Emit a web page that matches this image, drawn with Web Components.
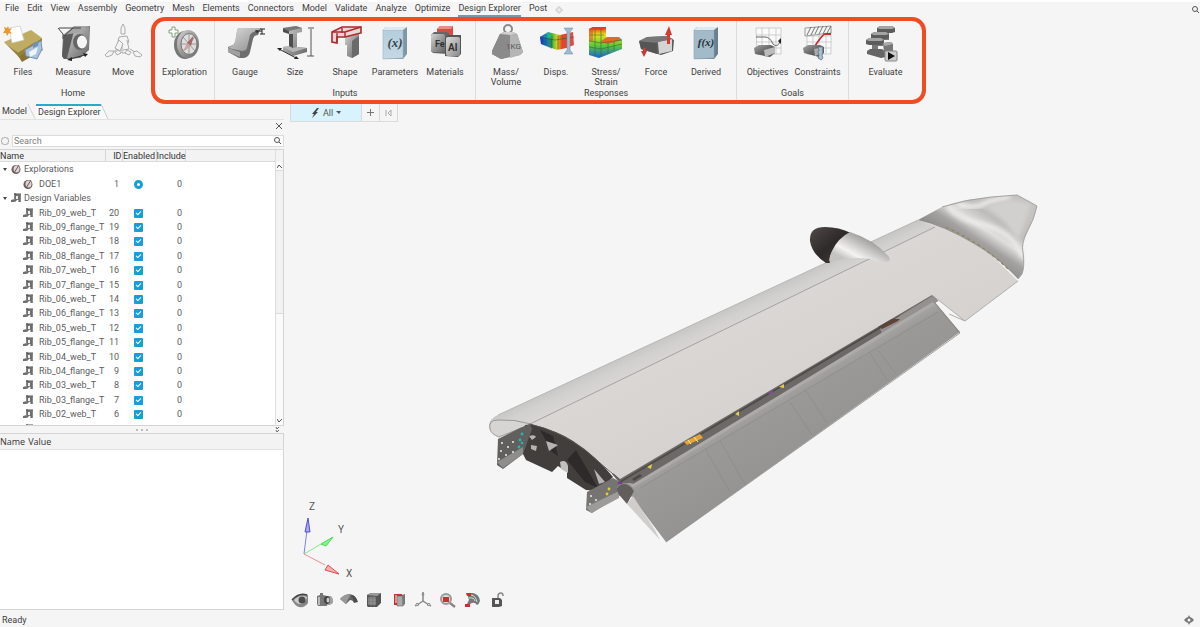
<!DOCTYPE html>
<html lang="en">
<head>
<meta charset="utf-8">
<title>Design Explorer</title>
<style>
html,body{margin:0;height:100%}
body{background:#f5f5f5;color:#404040;font:9px/12px Roboto,"Liberation Sans",Arial,sans-serif;overflow:hidden}
</style>
</head>
<body>
<de-app></de-app>
<script>
const DEFS = `<defs>
<linearGradient id="g" x1="0" y1="0" x2="1" y2="1"><stop offset="0" stop-color="#d4d4d4"/><stop offset=".5" stop-color="#9a9a9a"/><stop offset="1" stop-color="#666"/></linearGradient>
<linearGradient id="d" x1="0" y1="0" x2="1" y2="1"><stop offset="0" stop-color="#a4a4a4"/><stop offset=".5" stop-color="#666"/><stop offset="1" stop-color="#4c4c4c"/></linearGradient>
<linearGradient id="l" x1="0" y1="0" x2="1" y2="1"><stop offset="0" stop-color="#dcdcdc"/><stop offset="1" stop-color="#8a8a8a"/></linearGradient>
<linearGradient id="b" x1="0" y1="0" x2="0" y2="1"><stop offset="0" stop-color="#b4cedd"/><stop offset="1" stop-color="#c6d9e4"/></linearGradient>
<linearGradient id="r" x1="0" y1="0" x2="1" y2="0"><stop offset="0" stop-color="#2230c8"/><stop offset=".2" stop-color="#18a8c8"/><stop offset=".35" stop-color="#3cb83c"/><stop offset=".5" stop-color="#d8d020"/><stop offset=".65" stop-color="#e84028"/><stop offset="1" stop-color="#e05048"/></linearGradient>
<linearGradient id="v" x1="0" y1="0" x2="0" y2="1"><stop offset="0" stop-color="#e83018"/><stop offset=".25" stop-color="#e8e020"/><stop offset=".6" stop-color="#5cc83c"/><stop offset="1" stop-color="#1860d8"/></linearGradient>
</defs>`;

const beam = (x, y) => `<path d="M${x} ${y}l3-2h12l3 2v4l-3 1H${x+3}l-3-1z" fill="#5c5c5c"/><path d="M${x} ${y}l3-2h12l3 2-3 1h-12z" fill="#a4a4a4"/><path d="M${x+6} ${y+5}h6v7h-6z" fill="#777"/>`;

const ICONS = {
files:`<path d="M8 22l23-5 9 10-21 12z" fill="#8a7230"/><path d="M1 19l27-12 11 8-24 15z" fill="#c0ab62"/><path d="M1 19l14 11 24-15v3L16 34z" fill="#95803a"/><path d="M22 27l16-9 1 8-5 10-11-3z" fill="#a9c3dc" stroke="#7394b5"/><path d="M26 29l9-5-2 7-6 3z" fill="#eef4f8"/><path d="M30 20l6-2-1 5-5 2z" fill="#6f92b4"/><path d="M6 5l11-2 4 14-12 3z" fill="#fff" stroke="#c8c8c8" stroke-width=".7"/><path d="M5 3l1 3 3-1-2 3 2 3-3-1-2 3-1-3-3 0 2-3-1-3 3 1z" fill="#e8982c"/>`,
measure:`<path d="M10 12l12-8 15-1-1 24-9 8-16 1-2-3z" fill="#777"/><path d="M11 13l12-8v30l-12 1-2-3z" fill="#5c5c5c"/><path d="M21 8l15-4v22l-9 9H14z" fill="url(#g)"/><path d="M10 12l11-9 15 0-12 7z" fill="#a5a5a5"/><ellipse cx="27" cy="19" rx="7" ry="8" fill="#666"/><ellipse cx="29" cy="19" rx="5" ry="6.500" fill="#f5f5f5"/><path d="M6 5h22M5 5l5 6v5M11 13l9-8" stroke="#444" fill="none"/><path d="M17 36l15-4" stroke="#333"/><path d="M14 37l5-3v4zM35 31l-5-1 2 4z" fill="#222"/>`,
move:`<g fill="#f4f4f4" stroke="#a4a4a4" stroke-width=".9"><path d="M20 1l2 4v6h-4V5z"/><path d="M17 15h4v9h-4z"/><path d="M16 14l-1 5 4 2v9h5v-9l2-2-2-6z"/><path d="M16 17l-4 8 5 3 3-7zM24 17l2 9-6 1"/><path d="M14 26l-5 4M27 26l5 3"/><path d="M2 32l4-4 5 0-2 4-5 2zM39 32l-5-4-4 1 2 4 5 1z"/><path d="M12 29l4-2 2 3-4 2zM28 29l-4-2-2 3 4 2z"/></g>`,
exploration:`<ellipse cx="20" cy="22" rx="11" ry="14" fill="#777"/><ellipse cx="23" cy="21" rx="11" ry="14" fill="url(#g)"/><ellipse cx="24" cy="21" rx="8" ry="10.500" fill="#dedede" stroke="#777"/><path d="M24 11v20M16 21h16M18 14l12 14M30 14L18 28" stroke="#888" stroke-width=".8"/><path d="M29 12l-3 11-4-3z" fill="#a86a66"/><path d="M18 29l4-9 4 3z" fill="#c9a5a3"/><path d="M7 4h3v3h3v3h-3v4H7v-4H4V7h3z" fill="#fff" stroke="#6a8a5a" stroke-width=".8"/>`,
gauge:`<path d="M12 8q0-3 4-3h20l-3 7q-4 0-5 4l-3 13q-1 5-6 6h-5L3 29v-5l5-2q2-1 3-6z" fill="#6e6e6e"/><path d="M12 8q0-3 4-3h20l-3 3q-6 0-8 4l-3 13q-1 3-5 3L3 25l5-3q2-1 2-4z" fill="url(#l)"/><path d="M3 25l12 4v5L3 29z" fill="#a0a0a0"/><path d="M30 8h7M32 7v3M35 6h5M37 6v5M35 11h5" stroke="#222"/>`,
size:`<path d="M8 5l13-2 6 2v4l-5 1v14l10 1v4l-14 4-10-5v-4l6-1V10L8 9z" fill="url(#g)"/><path d="M8 5l13-2 6 2-13 3z" fill="#777"/><path d="M8 5l6 3v3l-6-2zM14 11h4v14h-4z" fill="#4d4d4d"/><path d="M8 24l6-1 4 2 4-1 10 1-14 4z" fill="#b5b5b5"/><path d="M33 5h6M32 33h7M36 6v27" stroke="#555"/><path d="M4 26l17 9" stroke="#333"/><path d="M2 25h5l-2 3zM24 36h-5l2-3z" fill="#222"/>`,
shape:`<path d="M20 14l14-5v22l-7 4-5-2V22h-2z" fill="url(#g)"/><path d="M27 18l7-5v18l-7 4z" fill="#6a6a6a"/><path d="M7 9l10-5h19v6l-16 4h-8v6l-5-1z" fill="#ead6d6" stroke="#b3262c" stroke-width="1.600"/><path d="M7 9h13l16-5M20 9v5M12 10v9M17 5v5" stroke="#b3262c" stroke-width="1.400" fill="none"/>`,
parameters:`<path d="M8 7l3-3h21v27l-4 5H9z" fill="#7f97a5"/><path d="M8 7h20v28L8 36z" fill="url(#b)" stroke="#9bb4c3" stroke-width=".6"/><path d="M8 7l3-3h21l-4 3z" fill="#dce9f0"/><text x="20" y="24" text-anchor="middle" font-family="Liberation Serif" font-style="italic" font-weight="700" font-size="13" fill="#38434a">(x)</text>`,
materials:`<path d="M12 6l3-3h13v17H12z" fill="#d94a44"/><path d="M12 6l3-3h13l-2 3z" fill="#ee8c80"/><path d="M6 12l3-3h13l3 3v18l-3 1-14-1-2-2z" fill="#666"/><rect x="6" y="11" width="14" height="18" rx="2" fill="url(#g)"/><text x="10" y="24" font-size="9" font-weight="700" fill="#333">Fe</text><path d="M20 15l3-3h13v19l-3 3-13-1z" fill="#555"/><rect x="21" y="14" width="14" height="19" rx="2" fill="url(#l)"/><text x="23" y="28" font-size="10" font-weight="700" fill="#333">Al</text>`,
mass:`<circle cx="22" cy="6" r="4" fill="none" stroke="#8a8a8a" stroke-width="2"/><path d="M14 11l4-2h9l4 2 6 18-3 3-19 4-9-5v-3z" fill="#777"/><path d="M14 11l10 1 3 21-12 3-9-5v-3z" fill="#8a8a8a"/><path d="M24 12l7-1 6 18-3 3-10 3z" fill="#b5b5b5"/><path d="M14 11l4-2h9l4 2-7 1z" fill="#d0d0d0"/><text x="20" y="26" font-size="8" fill="#555">1KG</text>`,
disps:`<path d="M4 14l8-5 12 3 13-3 1 13q-8 4-17 5L5 21z" fill="url(#r)"/><path d="M4 14l15 3 19-3M10 11v11M16 13v12M22 13v13" stroke="#263" fill="none" stroke-width=".6"/><path d="M4 14l12 2v10L5 21z" fill="#102080" opacity=".3"/><path d="M28 5h9l-3 4v18l3 4h-9l3-4V9z" fill="#9dbace" stroke="#6d8ba2" stroke-width=".5"/>`,
stress:`<path d="M3 6l4-2h13v11l12-1 4 3v9l-23 9-10-3z" fill="url(#v)"/><path d="M3 6l4-2h13l-3 3z" fill="#e04020"/><path d="M14 19l7-5 12 0 3 3-14 4z" fill="#e06a28"/><path d="M3 12h15M3 18l12 2 21-3M3 24l12 2 21-5M9 6v27M15 6v28M22 20v11M28 19v9" stroke="#326b28" stroke-width=".6" fill="none"/><path d="M3 6h4v12H3z" fill="#d8452c" opacity=".5"/>`,
force:`<path d="M3 18l8-4 20-1 7 4-1 11-12 4L5 26z" fill="url(#d)"/><path d="M22 19l14-3v12l-13 3z" fill="#d4d4d4"/><path d="M3 18l8-4 20-1 6 3-16 3z" fill="#777"/><path d="M3 18l18 2v11L5 26z" fill="#555"/><path d="M33 3l3 9h-2v9h-3v-9h-2z" fill="#d63a32"/><path d="M8 34l-3-6h2v-3h3v3h1z" fill="#c93a32"/>`,
derived:`<path d="M8 7l3-3h21v27l-4 5H9z" fill="#6a7f8d"/><path d="M8 7h20v28L8 36z" fill="#a3bac8" stroke="#8ba6b7" stroke-width=".6"/><path d="M8 7l3-3h21l-4 3z" fill="#dce9f0"/><text x="20" y="23" text-anchor="middle" font-family="Liberation Serif" font-style="italic" font-weight="700" font-size="11" fill="#263038">f(x)</text>`,
objectives:`<path d="M8 5h25v26H9zM8 12h25M8 19h25M8 25h25M14 5v26M21 5v26M28 5v26" fill="#fafafa" stroke="#bbb" stroke-width=".7"/><path d="M8 14h9q5 0 8 7 4 4 7-2" fill="none" stroke="#666"/><path d="M33 15v6l-3-3z" fill="#222"/><path d="M6 25l5-3h12l4 2v6l-5 4-15-3z" fill="url(#d)"/><path d="M16 27l11-3v6l-10 4z" fill="#bbb"/>`,
constraints:`<path d="M9 6h24v25H9zM9 13h24M9 19h24M9 25h24M15 5v26M21 5v26M28 5v26" fill="#fafafa" stroke="#bbb" stroke-width=".7"/><path d="M7 5l26-2v7l-26 3z" fill="#f4f4f4" stroke="#777" stroke-width=".7"/><path d="M9 12l4-8M13 12l4-8M17 11l4-8M21 11l4-8M25 11l4-8M29 10l4-7" stroke="#555" stroke-width=".8"/><path d="M17 23q7-11 10-12h6" fill="none" stroke="#c13036" stroke-width="1.800"/><path d="M5 25l5-3h12l4 2v6l-5 4-15-4z" fill="url(#d)"/><path d="M16 26l9-2v6l-8 3z" fill="#aaa"/><path d="M20 24h5l-1 3 1 2-1 3 1 3-2 2-3-2 1-3-1-3 1-2z" fill="#a9c1cf" stroke="#526b7c" stroke-width=".7"/>`,
evaluate:`<g>${beam(11,5)}${beam(5,11)}${beam(0,17)}</g><path d="M1 28l3-2h12l4 3v5l-5 1-14-4z" fill="#666"/><path d="M17 20l8-1 2 2v9h-9z" fill="#777"/><path d="M17 20l8-1 2 2-8 2z" fill="#aaa"/><rect x="19" y="28" width="12" height="10" rx="1" fill="#ccc" stroke="#888"/><path d="M22 29l7 4-7 4z" fill="#111"/>`,
spark:`<path d="M6 0L1 6h2L1 10l6-6H5l3-4z" fill="#444"/>`,
compass:`<ellipse cx="5" cy="5.500" rx="4.500" ry="4.500" fill="#6a5f5f"/><ellipse cx="5.500" cy="5" rx="3" ry="3.500" fill="#ddd4d4"/><path d="M8 1L3 9" stroke="#6b5555"/>`,
variable:`<path d="M3 1h7v8H8V7H5L3 9H0V7l3-1z" fill="#888"/><path d="M3 1h2v7M8 2v7M0 8h5M3 1h7" stroke="#555"/><path d="M5 3h2v3H5z" fill="#eee"/>`,
gear:`<path d="M4 1l1 1h2v2l1 1-1 1v2H5L4 9 3 8H1V6L0 5l1-1V2h2z" fill="none" stroke="#b0b0b0"/>`,
lens:`<circle cx="4" cy="4" r="2.500" fill="none" stroke="#555"/><path d="M6 6l2 2" stroke="#555"/>`,
target:`<path d="M5 0l1 2 2 1 2 2-2 2-2 1-1 2-1-2-2-1-2-2 2-2 2-1z" fill="#777"/><circle cx="5" cy="5" r="1.500" fill="#f5f5f5"/>`,
eye:`<path d="M1 9q6-8 16-5v8q-3 5-9 4-4-1-7-7z" fill="#888"/><path d="M3 9q6-6 13-3-2 7-7 7-3 0-6-4z" fill="#ccc"/><circle cx="11" cy="9" r="3.500" fill="#4c4c4c"/><path d="M1 9q7-8 15-5" stroke="#444" stroke-width="1.500" fill="none"/>`,
camera:`<path d="M1 5l3-1V2h3v2l4 1v10H2l-1-2z" fill="#777"/><path d="M11 5h4l2 3v4l-3 2h-3z" fill="#a2a2a2"/><ellipse cx="11" cy="9" rx="3" ry="4" fill="#444"/><ellipse cx="12" cy="9" rx="1.500" ry="2.500" fill="#ccc"/><path d="M2 6h2v8H2z" fill="#bbb"/>`,
sheet:`<path d="M0 8q4-5 10-5 6 1 8 8l-4 1q-1-3-4-3l-4 4z" fill="url(#d)"/><path d="M0 8q5-5 10-4l-4 9z" fill="#999"/><path d="M10 5q4 1 4 6h3q-1-6-5-7z" fill="#4c4c4c"/>`,
cube:`<path d="M2 4l4-2h10v10l-4 4H3l-1-1z" fill="#555"/><path d="M2 4l4-2h10l-4 3z" fill="#999"/><path d="M3 6h8v8H3z" fill="#777"/><path d="M6 5v10M9 5v10M3 9h8M3 12h8" stroke="#aaa" stroke-width=".5"/>`,
layers:`<path d="M4 3h8v11H4z" fill="#c92e2e"/><path d="M7 5h6v10H7z" fill="#aaa" stroke="#666" stroke-width=".6"/><path d="M12 4l3-1v10l-2 2z" fill="#777"/><path d="M5 4h2v8H5z" fill="#e98c8c"/>`,
triad:`<path d="M9 2v8M9 10l-6 4M9 10l6 4" stroke="#888" stroke-width="1.500"/><path d="M9 1l1 3H8zM1 15l2-3 2 2zM17 15l-2-3-2 2z" fill="#eee" stroke="#888"/>`,
zoomred:`<circle cx="7" cy="8" r="5" fill="#ddd" stroke="#999" stroke-width="2"/><path d="M4 6h6v5H4z" fill="#c93030"/><path d="M11 12l5 4" stroke="#888" stroke-width="2.500"/>`,
section:`<path d="M4 2h6q6 1 7 8-1 3-3 4-2-3-5-2-3 1-4 3H3l3-6z" fill="#777"/><path d="M8 4q5 1 6 7M6 7q5-1 6 3" stroke="#ddd" fill="none"/><path d="M3 2h5v3H4zM2 13h5v3H2z" fill="#c92e2e"/>`,
lock:`<path d="M10 8V5q0-3 3-3 2 0 2 3" fill="none" stroke="#888" stroke-width="1.500"/><path d="M4 7h8l2 2v6l-3 1H4z" fill="#555"/><path d="M7 9h4v4H7z" fill="#eee"/>`
};
const icon = (name, w, h = w) => `<svg class="ico" width="${w}" height="${h}" viewBox="0 0 ${w} ${h}" fill="none" aria-hidden="true">${DEFS}${ICONS[name]}</svg>`;
const BTN = `button{appearance:none;border:0;background:none;padding:0;margin:0;font:inherit;color:inherit;display:block}svg{display:block;flex:none}`;

class Base extends HTMLElement{
  connectedCallback(){ if(!this.shadowRoot) this.attachShadow({mode:'open'}).innerHTML = this.render(); }
}

class MenuBar extends Base{
  render(){
    const names = ['File','Edit','View','Assembly','Geometry','Mesh','Elements','Connectors','Model','Validate','Analyze','Optimize','Design Explorer','Post'];
    return `<style>:host{display:flex;align-items:center;height:17px;border-top:2px solid #fff;box-sizing:border-box;padding:0 0 0 5px}
    nav{display:flex;gap:8px;flex:1;align-items:center}a{color:#404040;text-decoration:none;line-height:13px;border-bottom:2px solid transparent;white-space:nowrap}
    a[aria-current]{border-color:#7599a6}${BTN}</style>
    <nav>${names.map(n=>`<a href="#"${n==='Design Explorer'?' aria-current="page"':''}>${n}</a>`).join('')}<button aria-label="Add ribbon"><svg width="8" height="8" viewBox="0 0 8 8"><path d="M3 1h2v2h2v2H5v2H3V5H1V3h2z" fill="#eee" stroke="#ccc"/></svg></button></nav>
    <button aria-label="Find">${icon('lens',9)}</button>`;
  }
}

class RibbonTool extends Base{
  render(){
    return `<style>:host{display:block;flex:0 0 50px}${BTN}button{width:100%;display:flex;flex-direction:column;align-items:center;gap:4px;line-height:10px;text-align:center}span{white-space:nowrap}</style>
    <button>${icon(this.getAttribute('icon'),40)}<span><slot></slot></span></button>`;
  }
}

class RibbonGroup extends Base{
  render(){
    return `<style>:host{display:grid;grid-template:65px 10px / minmax(0,1fr);box-sizing:border-box;padding:2px 0 0}
    :host([ruled]){border-right:1px solid #dcdcdc}
    .tools{display:flex;justify-content:center}.label{text-align:center;line-height:10px}</style>
    <div class="tools"><slot></slot></div><div class="label">${this.getAttribute('label')||''}</div>`;
  }
}

class RibbonBar extends Base{
  render(){
    const t = (i,l)=>`<ribbon-tool icon="${i}">${l}</ribbon-tool>`;
    return `<style>:host{display:flex;height:87px}
    .home{width:146px;margin-right:5px;padding-top:6px}
    .frame{display:flex;border:4px solid #f04b22;border-radius:14px;box-sizing:border-box}
    .one{width:60px}.in,.out{width:261px}.goals{width:112px}.run{width:73px}</style>
    <ribbon-group class="home" label="Home">${t('files','Files')}${t('measure','Measure')}${t('move','Move')}</ribbon-group>
    <div class="frame">
    <ribbon-group class="one" ruled>${t('exploration','Exploration')}</ribbon-group>
    <ribbon-group class="in" ruled label="Inputs">${t('gauge','Gauge')}${t('size','Size')}${t('shape','Shape')}${t('parameters','Parameters')}${t('materials','Materials')}</ribbon-group>
    <ribbon-group class="out" ruled label="Responses">${t('mass','Mass/<br>Volume')}${t('disps','Disps.')}${t('stress','Stress/<br>Strain')}${t('force','Force')}${t('derived','Derived')}</ribbon-group>
    <ribbon-group class="goals" ruled label="Goals">${t('objectives','Objectives')}${t('constraints','Constraints')}</ribbon-group>
    <ribbon-group class="run">${t('evaluate','Evaluate')}</ribbon-group>
    </div>`;
  }
}

class PanelTabs extends Base{
  render(){
    return `<style>:host{display:flex;height:15px;border-bottom:1px solid #e2e2e2}${BTN}
    button{height:15px;box-sizing:border-box;line-height:15px;padding:0 0 0 2px;white-space:nowrap}
    .on{border-top:2px solid #2aa9cb;background:#fafafa;line-height:11px}.edge{width:9px;height:15px}</style>
    <button>Model</button><svg class="edge" viewBox="0 0 9 15"><path d="M1 0l7 15" stroke="#d5d5d5"/></svg>
    <button class="on">Design Explorer</button><svg class="edge" viewBox="0 0 9 15"><path d="M0 0l7 15H0z" fill="#fafafa"/><path d="M0 0l7 15" stroke="#ccc"/></svg>`;
  }
}

class DesignTree extends Base{
  render(){
    const rows = [];
    let id = 20;
    for(const n of ['09','08','07','06','05','04','03','02']) for(const k of ['web','flange']) rows.push([`Rib_${n}_${k}_T`, id--]);
    rows.pop();
    const body = rows.map(([n,i])=>`<tr><td><div class="n leaf">${icon('variable',11,10)}<span>${n}</span></div></td><td class="id">${i}</td><td class="en"><input type="checkbox" checked aria-label="Enable ${n}"></td><td class="inc">0</td><td></td></tr>`).join('');
    const parent = (ic,n)=>`<tr><td colspan="5"><div class="n"><i></i>${icon(ic,11,10)}<span>${n}</span></div></td></tr>`;
    return `<style>:host{display:grid;grid-template-columns:1fr 8px;height:277px;border:1px solid #d4d4d4;border-left:0;box-sizing:border-box;background:#fff;overflow:hidden;position:relative}
    .scroll{overflow:hidden}
    table{border-collapse:collapse;table-layout:fixed;width:100%;color:#5c5c5c}
    th,td{padding:0;font-weight:400}
    th{padding-top:2px;line-height:9px;background:#f3f3f3;color:#333;text-align:left;border-bottom:1px solid #dadada;border-right:1px solid #d4d4d4;white-space:nowrap}
    th:last-child{border-right:0}
    .r{text-align:right}.c{text-align:center}
    tbody tr{height:14px}tbody tr:nth-child(5n+2),tbody tr:nth-child(5n+4){height:15px}
    td{line-height:14px;white-space:nowrap}
    .n{display:flex;align-items:center;gap:2px;padding-left:3px;height:14px}
    .n i{width:0;height:0;border:2px solid transparent;border-top:3px solid #444;border-bottom:0;margin-right:2px}
    .leaf{padding-left:23px;gap:5px}
    svg{display:block;flex:none}
    .id{text-align:right;padding-right:3px}.inc{text-align:right;padding-right:3px}
    .en{text-align:center}
    input{appearance:none;width:9px;height:9px;margin:0 0 0 -2px;background:#149fd8;border-radius:1px;display:inline-block;vertical-align:middle;position:relative}
    input[type=checkbox]::before{content:"";position:absolute;left:2px;top:2px;width:4px;height:2px;border:solid #fff;border-width:0 0 1px 1px;transform:rotate(-45deg)}
    input[type=radio]{border:3px solid #149fd8;background:#fff;border-radius:5px;box-sizing:border-box}
    .bar{background:#fafafa;border-left:1px solid #dedede;display:grid;grid-template-rows:12px 8px 144px 1fr 8px}
    .bar b{display:grid;place-items:center}
    .bar b:first-child{background:#f3f3f3}
    .thumb{background:#f1f1f1;border:1px solid #dadada;border-width:1px 0}
    </style>
    <div class="scroll"><table><colgroup><col style="width:105px"><col style="width:17px"><col style="width:34px"><col style="width:29px"><col></colgroup>
    <thead><tr><th>Name</th><th class="r">ID</th><th class="c">Enabled</th><th class="c">Include</th><th></th></tr></thead>
    <tbody>${parent('compass','Explorations')}
    <tr><td><div class="n leaf">${icon('compass',11,10)}<span>DOE1</span></div></td><td class="id">1</td><td class="en"><input type="radio" aria-label="Enable DOE1"></td><td class="inc">0</td><td></td></tr>
    ${parent('variable','Design Variables')}${body}
    <tr><td colspan="5"><div class="n leaf">${icon('variable',11,10)}</div></td></tr></tbody></table></div>
    <div class="bar"><b></b><b><svg width="5" height="4"><path d="M0 4l2-3 3 3" fill="none" stroke="#555"/></svg></b><div class="thumb"></div><span></span><b><svg width="5" height="4"><path d="M0 0l2 3 3-3" fill="none" stroke="#555"/></svg></b></div>`;
  }
}

class ExplorerPanel extends Base{
  render(){
    return `<style>:host{display:flex;flex-direction:column;width:284px;flex:none;min-height:0}${BTN}
    .close{height:14px;display:flex;justify-content:flex-end;align-items:flex-start;padding:3px 2px 0;box-sizing:border-box;flex:none}
    .search{display:flex;align-items:center;height:13px;gap:2px;padding-left:1px;margin-bottom:2px;flex:none}
    .field{display:flex;flex:1;align-items:center;background:#fff;border:1px solid #dcdcdc;box-sizing:border-box;height:12px;padding-right:1px}
    input{flex:1;border:0;outline:0;background:none;font:inherit;line-height:10px;padding:0 0 0 1px;height:10px;min-width:0;color:#444}
    input::placeholder{color:#808080;opacity:1}
    .split{height:7px;display:flex;align-items:center;justify-content:center;gap:3px;flex:none;position:relative}
    .split i{width:2px;height:2px;background:#aaa;border-radius:1px}
    .split svg{position:absolute;right:4px;top:1px}
    .values{flex:1;background:#fff;border:1px solid #d4d4d4;border-left:0;margin-bottom:2px}
    table{width:100%;border-collapse:collapse}th{font:9px/14px "Open Sans","Noto Sans",sans-serif;color:#333;text-align:left;padding:1px 3px 0 0}thead{background:#f3f3f3}th:last-child{width:100%}th{border-bottom:1px solid #e2e2e2}</style>
    <panel-tabs></panel-tabs>
    <div class="close"><button aria-label="Close"><svg width="6" height="6"><path d="M0 0l6 6M6 0L0 6" stroke="#555"/></svg></button></div>
    <div class="search"><button aria-label="Search options">${icon('gear',9,10)}</button><div class="field"><input type="text" placeholder="Search" aria-label="Search"><button aria-label="Run search">${icon('lens',9)}</button></div></div>
    <design-tree></design-tree>
    <div class="split"><i></i><i></i><i></i><svg width="5" height="6"><path d="M1 0l1 2 2-2M1 3l1 2 2-2" fill="none" stroke="#666"/></svg></div>
    <div class="values"><table><thead><tr><th>Name</th><th>Value</th></tr></thead></table></div>`;
  }
}

class ModelScene extends Base{
  render(){
    return `<style>:host{display:block}svg{display:block;width:100%;height:100%}text{font-size:10px;fill:#555}</style>
    <svg viewBox="285 104 915 508" preserveAspectRatio="xMinYMin meet" role="img" aria-label="Wing assembly">
    <defs>
    <linearGradient id="top" gradientUnits="userSpaceOnUse" x1="700" y1="310" x2="760" y2="440"><stop offset="0" stop-color="#d0cecc"/><stop offset=".12" stop-color="#dad7d5"/><stop offset="1" stop-color="#d4d1cf"/></linearGradient>
    <linearGradient id="le" gradientUnits="userSpaceOnUse" x1="700" y1="321" x2="712" y2="347"><stop offset="0" stop-color="#c6c6c4"/><stop offset=".3" stop-color="#d1d0ce"/><stop offset="1" stop-color="#dcdad8"/></linearGradient>
    <linearGradient id="flap" gradientUnits="userSpaceOnUse" x1="780" y1="392" x2="812" y2="446"><stop offset="0" stop-color="#a9a7a6"/><stop offset=".2" stop-color="#9b9998"/><stop offset="1" stop-color="#969493"/></linearGradient>
    <linearGradient id="tip" gradientUnits="userSpaceOnUse" x1="995" y1="194" x2="962" y2="245"><stop offset="0" stop-color="#c4c3c1"/><stop offset=".35" stop-color="#bebcba"/><stop offset=".58" stop-color="#e0dedd"/><stop offset=".78" stop-color="#a3a2a0"/><stop offset="1" stop-color="#8f8e8c"/></linearGradient>
    <linearGradient id="nac" gradientUnits="userSpaceOnUse" x1="864" y1="236" x2="850" y2="262"><stop offset="0" stop-color="#9c9a98"/><stop offset=".35" stop-color="#c8c6c4"/><stop offset=".7" stop-color="#f4f3f2"/><stop offset="1" stop-color="#c5c3c1"/></linearGradient>
    <linearGradient id="cone" x1="0" y1="0" x2="1" y2="1"><stop offset="0" stop-color="#504a48"/><stop offset=".5" stop-color="#2e2a29"/><stop offset="1" stop-color="#47423f"/></linearGradient>
    <filter id="soft" x="-20%" y="-20%" width="140%" height="140%"><feGaussianBlur stdDeviation="2"/></filter>
    </defs>
    <path d="M612 474L932 294l6 7-300 186-16-1z" fill="#6c6967"/>
    <path d="M490 431q-3-11 8-16L918 220l24-13 76 74-53 40-33-26-312 184q-26-24-60-43-20-10-30-13l-32 12q-6-2-8-6z" fill="url(#top)"/>
    <path d="M498 415L918 220l17 7-405 197-32 10q-8-2-9-8 0-7 9-11z" fill="url(#le)"/>
    <path d="M490 429q-2-9 8-9 16-1 33 4l-32 13q-8-3-9-8z" fill="#d7d5d3" stroke="#8a8886" stroke-width=".8"/>
    <path d="M498 415L918 220" stroke="#b0aeac" stroke-width=".7"/>
    <path d="M530 424L935 227" stroke="#a4a2a0" stroke-width="1" fill="none"/>
    <path d="M918 220l24-13q8-4 26-7l23-3 26-2 20 11q-3 14-10 26-6 12-4 20 2 14-1 22l-4 5q-21-22-44-35-30-18-56-24z" fill="url(#tip)"/>
    <path d="M948 207q10 12 33 17 34 8 42 34" fill="none" stroke="#f0efee" stroke-width="4" filter="url(#soft)"/>
    <path d="M957 204q18 6 31-2l22-5" fill="none" stroke="#f4f3f2" stroke-width="4" filter="url(#soft)"/>
    <path d="M985 208q20-12 46-4-6 22-13 38-12-24-33-34z" fill="#d2d0ce" filter="url(#soft)"/>
    <path d="M942 207q25-8 49-10l26-2 20 11q-3 14-10 26-6 12-4 20 2 14-1 22l-4 5" fill="none" stroke="#9e9c9a" stroke-width=".9"/>
    <path d="M946 227q37 17 64 44" fill="none" stroke="#8b875f" stroke-dasharray="3 3" stroke-width="1.200"/>
    <path d="M1018 281l-53 40-16-7" fill="none" stroke="#b0aeac"/>
    <path d="M826 263q-14-9-16-22-1-14 15-14 14 0 26 6-12 6-18 17-5 8-3 13z" fill="url(#cone)"/>
    <path d="M850 232q25 8 39 25 3 5-4 5-7 0-15-3-16-3-40 3-1-4 2-11 6-13 18-19z" fill="url(#nac)"/>
    <path d="M521 443l4-18q6-1 9 0 24 6 39 16 22 14 40 36l-14 14-13-1-19-12v-6l-9-6-6 6-26-12-4-8z" fill="#413e3c"/>
    <path d="M540 430l13 6 5 20-6-4zM576 450l22 38-13-6-18-22z" fill="#2d2a29"/>
    <path d="M546 441l12 4-9 6zM529 436q6-2 7 1l-4 3zM594 469l11 13-6 2zM531 445l6 1-1 5-5-2z" fill="#b6b4b2"/>
    <path d="M560 462q6-3 8 4v7l-7-4z" fill="#c2c0be"/><path d="M530 424q30 7 56 27l34 29" fill="none" stroke="#55524f"/>
    <path d="M498 439l22-11 10-4 2 5-9 25-20 15-6-4z" fill="#62605e"/>
    <path d="M497 462l26-15v7l-20 14z" fill="#8f8d8b"/>
    <g fill="#eee"><circle cx="502" cy="443" r="1"/><circle cx="501" cy="451" r="1"/><circle cx="499" cy="459" r="1"/><circle cx="508" cy="447" r="1"/><circle cx="506" cy="455" r="1"/><circle cx="513" cy="452" r="1"/><circle cx="513" cy="442" r="1"/></g>
    <g fill="#26b5b0"><circle cx="522" cy="434" r="1.400"/><circle cx="520" cy="440" r="1.400"/><circle cx="522" cy="443" r="1.300"/><circle cx="519" cy="447" r="1.400"/></g>
    <path d="M587 492l26-14 7 4 2 12-30 19-6-3z" fill="#767472"/><path d="M586 507l33-16v7l-28 15z" fill="#9d9b99"/>
    <g fill="#eee"><circle cx="591" cy="496" r="1"/><circle cx="590" cy="504" r="1"/><circle cx="596" cy="500" r="1"/></g><g fill="#dccf38"><circle cx="609" cy="489" r="1.400"/><circle cx="607" cy="494" r="1.400"/></g>
    <path d="M618 487q6-6 17-3L934 301l26 31-294 210-34-45q-12-5-14-10z" fill="url(#flap)"/>
    <path d="M620 482L900 316" stroke="#4f4c4a" stroke-width="1.800"/>
    <path d="M880 328l52-32 6 5-56 33z" fill="#94918f"/>
    <path d="M631 487L934 303" stroke="#adabaa" stroke-width="3"/>
    <path d="M617 488q3-6 10-4 6 3 7 7l-7 13-6-7q-4-4-4-9z" fill="#615e5c"/>
    <path d="M617 488q3-6 10-4 6 3 7 7" fill="none" stroke="#8d8b89"/>
    <path d="M627 504l6-8 22 34 5 10z" fill="#d0cecc"/>
    <path d="M705 448l25 44M720 441l25 43M790 402l22 33M805 390l22 33M870 353l17 27M878 350l18 24M640 488L938 312" fill="none" stroke="#878583" stroke-width=".5"/>
    <path d="M666 542l294-209-26-31" fill="none" stroke="#7d7b79" stroke-width=".7"/>
    <path d="M632 479l8-5 2 2-8 5z" fill="#4a4745"/>
    <path d="M684 442l16-8 3 4-16 7z" fill="#e3a53a"/><path d="M688 440l3 4M694 437l4 5" stroke="#fff08a"/>
    <path d="M735 414l4-3v5zM779 387l5-3v4zM647 467l5-3-1 5z" fill="#e1cf45"/><path d="M769 394l4-3" stroke="#864aa0" stroke-width="2"/><path d="M618 483h4" stroke="#793895" stroke-width="2"/>
    <path d="M878 327l14-8h8l-2 2-16 8z" fill="#5d4339"/>
    <path d="M932 295l33 26" stroke="#b2b0ae"/>
    <g fill="none"><path d="M304 554l3-24" stroke="#8080e8"/><path d="M308 518l2 14h-5z" stroke="#5050dd" fill="#a8a8f4"/><path d="M304 554l17-10" stroke="#80e888"/><path d="M333 537l-7 9-5-2z" stroke="#42dc50" fill="#8bf095"/><path d="M304 554l21 11" stroke="#f09090"/><path d="M339 574l-14-4 3-5z" stroke="#e44a4a" fill="#f4b3b3"/></g>
    <text x="309" y="510">Z</text><text x="338" y="533">Y</text><text x="346" y="577">X</text>
    </svg>`;
  }
}

class ModelViewport extends Base{
  render(){
    const tools = [['eye','Show or hide'],['camera','Capture'],['sheet','Surface display'],['cube','Mesh display'],['layers','Layers'],['triad','Views'],['zoomred','Zoom'],['section','Section cut'],['lock','Lock']];
    return `<style>:host{display:flex;flex-direction:column;flex:1;position:relative;min-width:0}${BTN}
    model-scene{position:absolute;inset:0 0 0 1px}
    .tabs{display:flex;height:17px;margin-left:6px;position:relative;border-bottom:1px solid #dcdcdc;align-self:flex-start}
    .tabs button{display:flex;align-items:center;justify-content:center;border-right:1px solid #d8d8d8;width:18px;color:#888}
    .tabs .all{width:72px;background:#d8f3fb;gap:3px;color:#555;border-left:1px solid #d8d8d8}
    .tools{position:relative;margin:auto 0 3px 7px;width:215px;display:flex;justify-content:space-between}</style>
    <model-scene></model-scene>
    <div class="tabs"><button class="all">${icon('spark',9,10)}All<svg width="5" height="3"><path d="M0 0h5L3 3z" fill="#555"/></svg></button><button aria-label="Add session"><svg width="7" height="7"><path d="M3 0h1v3h3v1H4v3H3V4H0V3h3z" fill="#777"/></svg></button><button aria-label="First session"><svg width="7" height="6"><path d="M1 0v6M6 0L3 3l3 3z" stroke="#aaa" fill="none"/></svg></button></div>
    <div class="tools">${tools.map(([i,l])=>`<button aria-label="${l}">${icon(i,18)}</button>`).join('')}</div>`;
  }
}

class StatusBar extends Base{
  render(){
    return `<style>:host{display:flex;height:15px;align-items:center;justify-content:space-between;padding:0 6px 0 2px;flex:none}${BTN}</style><span>Ready</span><button aria-label="Settings">${icon('target',10)}</button>`;
  }
}

class App extends Base{
  render(){
    return `<style>:host{display:flex;flex-direction:column;height:100vh}main{flex:1;display:flex;min-height:0}</style>
    <menu-bar></menu-bar><ribbon-bar></ribbon-bar><main><explorer-panel></explorer-panel><model-viewport></model-viewport></main><status-bar></status-bar>`;
  }
}
Object.entries({'menu-bar':MenuBar,'ribbon-tool':RibbonTool,'ribbon-group':RibbonGroup,'ribbon-bar':RibbonBar,'panel-tabs':PanelTabs,'design-tree':DesignTree,'explorer-panel':ExplorerPanel,'model-scene':ModelScene,'model-viewport':ModelViewport,'status-bar':StatusBar,'de-app':App}).forEach(([n,c])=>customElements.define(n,c));
</script>
</body>
</html>
